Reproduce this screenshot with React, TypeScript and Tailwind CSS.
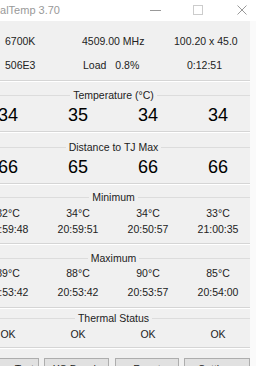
import React from 'react'

const font = { fontFamily: '"Liberation Sans", Arial, sans-serif' }

const cols = 'grid grid-cols-[70px_70px_70px_70px] text-center'

function Sep({ className = '' }: { className?: string }) {
  return <div className={`h-[2px] border-t border-[#d5d5d5] border-b border-b-white ${className}`} />
}

function GroupHead({ label, className = '' }: { label: string; className?: string }) {
  return (
    <div className={`flex items-center h-[14px] pl-[4px] ${className}`}>
      <div className="flex-1 border-t border-[#dcdcdc]" />
      <span className="px-[3px] text-[10.5px] leading-[14px] text-[#222]">{label}</span>
      <div className="flex-1 border-t border-[#dcdcdc]" />
    </div>
  )
}

function Row({ values, big = false, className = '' }: { values: string[]; big?: boolean; className?: string }) {
  return (
    <div className={`${cols} ${big ? 'h-[22px] text-[18px] leading-[22px] text-black' : 'h-[14px] text-[10.5px] leading-[14px] text-[#222]'} ${className}`}>
      {values.map((v, i) => (
        <span key={i} className="whitespace-nowrap">{v}</span>
      ))}
    </div>
  )
}

export default function App() {
  return (
    <div className="w-[256px] h-[366px] overflow-hidden bg-[#f0f0f0] flex flex-col" style={font}>
      {/* title bar */}
      <div className="h-[21px] bg-white flex items-center shrink-0 relative">
        <span className="ml-[-14px] text-[11px] text-[#999] whitespace-nowrap">RealTemp 3.70</span>
        <svg className="absolute left-[150px] top-[10px]" width="11" height="1" viewBox="0 0 11 1">
          <rect width="11" height="1" fill="#999" />
        </svg>
        <svg className="absolute left-[193px] top-[5px]" width="10" height="10" viewBox="0 0 10 10">
          <rect x="0.5" y="0.5" width="9" height="9" fill="none" stroke="#ccc" />
        </svg>
        <svg className="absolute left-[237px] top-[5px]" width="10" height="10" viewBox="0 0 10 10">
          <path d="M0.5 0.5 L9.5 9.5 M9.5 0.5 L0.5 9.5" stroke="#999" strokeWidth="1" />
        </svg>
      </div>

      <div className="flex flex-1">
        <div className="w-[277px] ml-[-27px] shrink-0 flex flex-col">
          {/* info rows */}
          <div className="mt-[9px] h-[24px] flex items-center pl-[32px] text-[10.5px] text-[#222] whitespace-nowrap">
            <span className="w-[77px]">6700K</span>
            <span className="w-[92px]">4509.00 MHz</span>
            <span>100.20 x 45.0</span>
          </div>
          <div className="h-[24px] flex items-center pl-[32px] text-[10.5px] text-[#222] whitespace-nowrap">
            <span className="w-[78px]">506E3</span>
            <span className="w-[104px] flex gap-[9px]">
              <span>Load</span>
              <span>0.8%</span>
            </span>
            <span>0:12:51</span>
          </div>
          <Sep className="mt-[2px]" />

          <GroupHead label="Temperature (°C)" className="mt-[6px]" />
          <Row big values={['34', '35', '34', '34']} className="mt-[2px]" />
          <Sep className="mt-[5px]" />

          <GroupHead label="Distance to TJ Max" className="mt-[7px]" />
          <Row big values={['66', '65', '66', '66']} className="mt-[2px]" />
          <Sep className="mt-[5px]" />

          <GroupHead label="Minimum" className="mt-[5px]" />
          <Row values={['32°C', '34°C', '34°C', '33°C']} className="mt-[2px]" />
          <Row values={['20:59:48', '20:59:51', '20:50:57', '21:00:35']} className="mt-[2px]" />
          <Sep className="mt-[7px]" />

          <GroupHead label="Maximum" className="mt-[6px]" />
          <Row values={['89°C', '88°C', '90°C', '85°C']} className="mt-[1px]" />
          <Row values={['20:53:42', '20:53:42', '20:53:57', '20:54:00']} className="mt-[5px]" />
          <Sep className="mt-[8px]" />

          <GroupHead label="Thermal Status" className="mt-[2px]" />
          <Row values={['OK', 'OK', 'OK', 'OK']} className="mt-[2px]" />
          <Sep className="mt-[6px]" />

          {/* buttons */}
          <div className="mt-[9px] flex gap-[5px] pl-[1px] text-[10.5px] text-[#222]">
            {['Sensor Test', 'XS Bench', 'Reset', 'Settings'].map((b, i) => (
              <div
                key={b}
                className={`h-[22px] ${i === 3 ? 'w-[67px]' : 'w-[66px]'} ${i === 2 ? 'ml-[1px]' : ''} border border-[#adadad] bg-[#e1e1e1] flex justify-center pt-[4px] leading-[13px] whitespace-nowrap`}
              >
                {b}
              </div>
            ))}
          </div>
        </div>
        <div className="flex-1 bg-[#fafafa]" />
      </div>
    </div>
  )
}
